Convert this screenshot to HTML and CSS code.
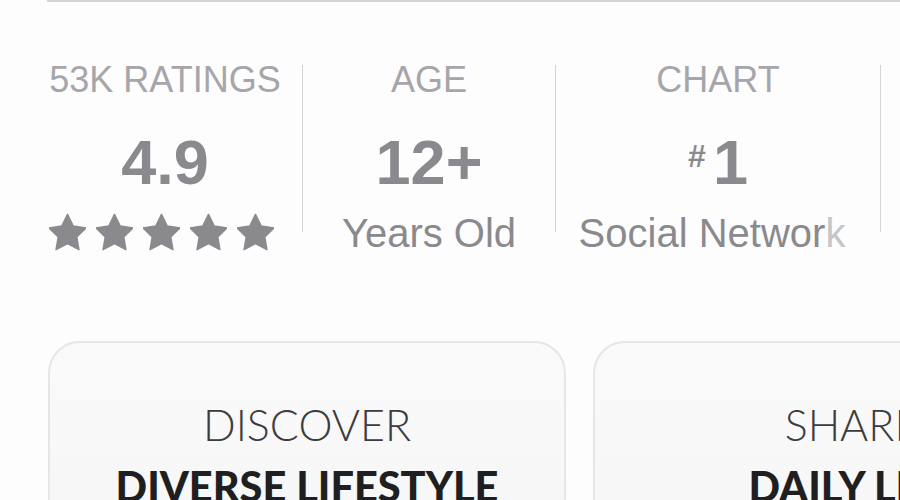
FILE: index.html
```html
<!DOCTYPE html>
<html lang="en">

<head>
    <meta charset="UTF-8">
    <meta name="viewport" content="width=device-width, initial-scale=1.0">
    <title>App Info</title>
    <link rel="stylesheet" href="styles.css">
</head>

<body>
    <div class="top-rule"></div>

    <section class="stats">
        <div class="stat stat-ratings">
            <div class="stat-label">53K RATINGS</div>
            <div class="stat-value">4.9</div>
            <div class="stars">
                <svg viewBox="2 1.5 20 20"><polygon points="12,2 15.09,8.26 22,9.27 17,14.14 18.18,21.02 12,17.77 5.82,21.02 7,14.14 2,9.27 8.91,8.26" stroke-linejoin="round" stroke-width="0.8" /></svg>
                <svg viewBox="2 1.5 20 20"><polygon points="12,2 15.09,8.26 22,9.27 17,14.14 18.18,21.02 12,17.77 5.82,21.02 7,14.14 2,9.27 8.91,8.26" stroke-linejoin="round" stroke-width="0.8" /></svg>
                <svg viewBox="2 1.5 20 20"><polygon points="12,2 15.09,8.26 22,9.27 17,14.14 18.18,21.02 12,17.77 5.82,21.02 7,14.14 2,9.27 8.91,8.26" stroke-linejoin="round" stroke-width="0.8" /></svg>
                <svg viewBox="2 1.5 20 20"><polygon points="12,2 15.09,8.26 22,9.27 17,14.14 18.18,21.02 12,17.77 5.82,21.02 7,14.14 2,9.27 8.91,8.26" stroke-linejoin="round" stroke-width="0.8" /></svg>
                <svg viewBox="2 1.5 20 20"><polygon points="12,2 15.09,8.26 22,9.27 17,14.14 18.18,21.02 12,17.77 5.82,21.02 7,14.14 2,9.27 8.91,8.26" stroke-linejoin="round" stroke-width="0.8" /></svg>
            </div>
        </div>
        <div class="divider"></div>
        <div class="stat stat-age">
            <div class="stat-label">AGE</div>
            <div class="stat-value">12+</div>
            <div class="stat-sub">Years Old</div>
        </div>
        <div class="divider"></div>
        <div class="stat stat-chart">
            <div class="stat-label">CHART</div>
            <div class="stat-value"><span class="hash">#</span>1</div>
            <div class="stat-sub">Social Networ<span class="fade">k</span></div>
        </div>
        <div class="divider"></div>
    </section>

    <section class="cards">
        <div class="card">
            <div class="card-kicker">DISCOVER</div>
            <div class="card-title">DIVERSE LIFESTYLE</div>
        </div>
        <div class="card">
            <div class="card-kicker">SHARE</div>
            <div class="card-title">DAILY LIFE</div>
        </div>
    </section>
</body>

</html>
```

FILE: styles.css
```css
:root {
    --bg-color: #fdfdfd;
    --rule: #d4d4d6;
    --label: #a6a6aa;
    --value: #8a8a8e;
    --card-bg: #f8f8f8;
    --card-border: #e6e6e8;
}

* {
    margin: 0;
    padding: 0;
    box-sizing: border-box;
}

body {
    font-family: 'Liberation Sans', Arial, sans-serif;
    background-color: var(--bg-color);
    overflow: hidden;
    width: 900px;
    height: 500px;
}

.top-rule {
    margin-left: 47px;
    border-top: 2px solid var(--rule);
}

.stats {
    display: flex;
    margin-top: 60px;
    padding-left: 48px;
}

.stat {
    text-align: center;
    flex-shrink: 0;
}

.stat-ratings {
    width: 234px;
}

.stat-age {
    width: 212px;
}

.stat-chart {
    width: 284px;
}

.stat-chart .stat-sub {
    padding-right: 12px;
}

.divider {
    width: 1px;
    height: 167px;
    margin: 3px 20px 0;
    background: var(--rule);
    flex-shrink: 0;
}

.stat-label {
    font-size: 36px;
    line-height: 1;
    color: var(--label);
}

.stat-value {
    font-size: 63px;
    font-weight: bold;
    line-height: 1;
    color: var(--value);
    margin-top: 33px;
}

.hash {
    font-size: 32px;
    vertical-align: 17px;
    margin-right: 7px;
}

.stat-sub {
    font-size: 40px;
    line-height: 1;
    color: var(--value);
    margin-top: 19px;
    white-space: nowrap;
}

.fade {
    color: #c6c6ca;
}

.stars {
    display: flex;
    gap: 10px;
    margin-top: 19px;
    padding-left: 1px;
}

.stars svg {
    width: 37px;
    height: 38px;
    fill: var(--value);
    stroke: var(--value);
}

.cards {
    display: flex;
    gap: 27px;
    margin-top: 88px;
    padding-left: 48px;
}

.card {
    flex-shrink: 0;
    width: 518px;
    height: 260px;
    border: 2px solid var(--card-border);
    border-radius: 32px;
    background: linear-gradient(180deg, #fafafa, #f5f5f6);
    text-align: center;
    padding-top: 56px;
}

.card-kicker {
    font-family: 'Lato', sans-serif;
    font-weight: 300;
    font-size: 43px;
    line-height: 1.2;
    color: #3c3c3e;
}

.card-title {
    font-family: 'Lato', sans-serif;
    font-weight: 900;
    font-size: 41.5px;
    line-height: 1.2;
    color: #1f1f21;
    margin-top: 11px;
}
```
